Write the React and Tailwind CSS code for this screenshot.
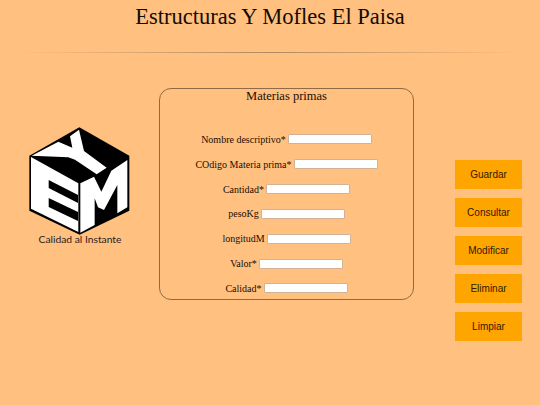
import React from "react";

const fields = [
  "Nombre descriptivo*",
  "COdigo Materia prima*",
  "Cantidad*",
  "pesoKg",
  "longitudM",
  "Valor*",
  "Calidad*",
];

const actions = ["Guardar", "Consultar", "Modificar", "Eliminar", "Limpiar"];

function Logo() {
  return (
    <svg viewBox="0 0 330 345" className="block w-[110px] h-[115px]">
      <polygon points="163,16 313,101 313,266 164,338 13,266 13,101" fill="#000" />
      {/* left face, E */}
      <polygon points="18,105 160,184 160,330 18,260" fill="#fff" />
      <polygon points="71,174 159,219 159,243 71,198" fill="#000" />
      <polygon points="71,228 159,270 159,297 71,255" fill="#000" />
      {/* right face, M */}
      <polygon points="166,184 207,164 229,209 259,146 307,114 307,256 277,274 277,189 237,264 219,256 209,229 209,309 166,332" fill="#fff" />
      {/* top face, Y */}
      <polygon points="135,43 162,23 177,87 245,137 215,157 150,113 130,106 20,101 100,59 142,77" fill="#fff" />
    </svg>
  );
}

export default function App() {
  return (
    <div className="h-[405px] w-[540px] overflow-hidden bg-[#ffc080] text-[#1a0f05] font-['Liberation_Serif',serif]">
      <h1 className="pt-[3px] h-[52px] text-center text-[22.5px] leading-[27px] text-[#140c04]">
        Estructuras Y Mofles El Paisa
      </h1>
      <div className="mx-5 h-px bg-gradient-to-r from-transparent via-[#b08a62] to-transparent" />

      <div className="flex items-start">
        <div className="ml-[25px] mt-[69px] w-[110px]">
          <Logo />
          <p className="-mt-[5px] text-center text-[10.3px] leading-[14px] text-[#2a2320] font-['Lato',sans-serif]">
            Calidad al Instante
          </p>
        </div>

        <section className="ml-[24px] mt-[35px] h-[212px] w-[255px] rounded-xl border border-[#8f6a45] px-2">
          <h2 className="text-center text-[12.5px] leading-[15px]">Materias primas</h2>
          <div className="mt-[23px] flex flex-col">
            {fields.map((label) => (
              <label key={label} className="flex h-[24.83px] items-center justify-center gap-[2px] text-[10px]">
                <span>{label}</span>
                <input
                  type="text"
                  className="h-[10px] w-[84px] rounded-[1px] border border-[#d2b294] bg-white"
                />
              </label>
            ))}
          </div>
        </section>

        <div className="ml-[41px] mt-[107px] flex flex-col gap-[9px]">
          {actions.map((name) => (
            <button
              key={name}
              type="button"
              className="h-[29px] w-[67px] bg-[#ffa500] text-[10px] text-[#2e1a04] font-['Liberation_Sans',sans-serif]"
            >
              {name}
            </button>
          ))}
        </div>
      </div>
    </div>
  );
}
